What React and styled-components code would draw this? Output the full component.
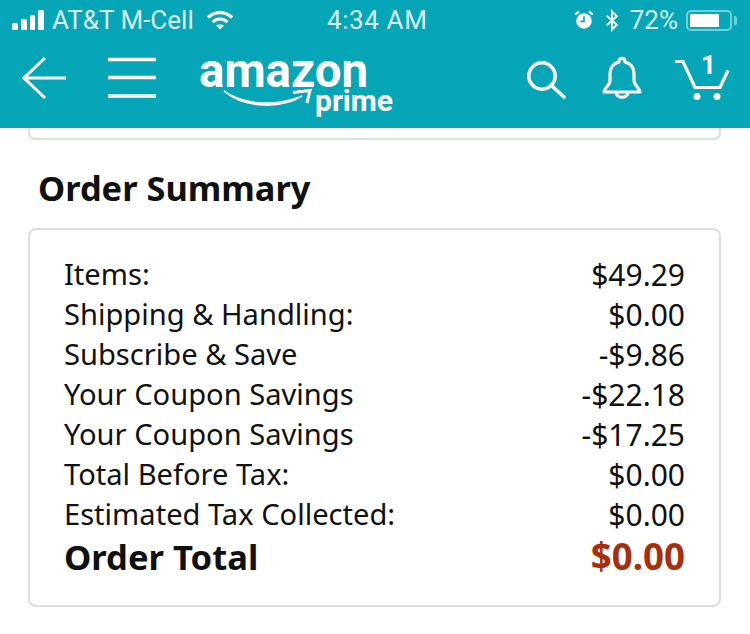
import React from 'react';
import styled, { createGlobalStyle } from 'styled-components';

const GlobalStyle = createGlobalStyle`
  html, body {
    margin: 0;
    padding: 0;
    background: #fff;
    font-family: "Noto Sans", "Open Sans", sans-serif;
  }
`;

const Page = styled.div`
  width: 750px;
  height: 634px;
  overflow: hidden;
  background: #fff;
  color: #111;
`;

const Header = styled.header`
  height: 128px;
  background: #06a5b8;
  color: #fff;
  display: flex;
  flex-direction: column;
`;

const StatusBar = styled.div`
  height: 40px;
  padding: 0 11px 0 12px;
  display: flex;
  align-items: center;
  justify-content: space-between;
  font-family: "Roboto", sans-serif;
  font-size: 26px;
  color: #d8f1f4;
`;

const StatusGroup = styled.div`
  flex: 1;
  display: flex;
  align-items: center;
  justify-content: ${(p) => p.$justify || 'flex-start'};
  gap: ${(p) => p.$gap || 8}px;
  white-space: nowrap;
`;

const Clock = styled.div`
  width: 100px;
  margin: 0 -3px 0 0;
  text-align: center;
  letter-spacing: 0.6px;
  white-space: nowrap;
`;

const Signal = styled.div`
  display: flex;
  align-items: flex-end;
  gap: 3px;
  height: 20px;
`;

const SignalBar = styled.span`
  width: 5.75px;
  height: ${(p) => p.$h}px;
  background: #fff;
  border-radius: 1.5px;
`;

const WifiIcon = styled.svg`
  margin-left: 4px;
`;

const BluetoothIcon = styled.svg`
  margin-left: 3px;
`;

const BatteryText = styled.span`
  margin-left: 3px;
`;

const Battery = styled.div`
  width: 46px;
  height: 21px;
  margin-right: 7px;
  box-sizing: border-box;
  border: 2px solid #6fd0dc;
  border-radius: 5px;
  padding: 2px;
  position: relative;
  &::after {
    content: '';
    position: absolute;
    right: -7px;
    top: 4px;
    width: 3px;
    height: 9px;
    border-radius: 0 2px 2px 0;
    background: #6fd0dc;
  }
`;

const BatteryFill = styled.div`
  width: 75%;
  height: 100%;
  background: #fff;
`;

const NavBar = styled.nav`
  flex: 1;
  display: flex;
  align-items: flex-start;
  padding: 15px 20px 0 22px;
`;

const NavIcon = styled.svg`
  display: block;
  flex: none;
  margin: ${(p) => p.$margin || 0};
`;

const Logo = styled.div`
  position: relative;
  width: 200px;
  height: 70px;
  margin-left: 44px;
`;

const LogoWord = styled.span`
  position: absolute;
  left: -1px;
  top: 0;
  font-family: "Roboto", sans-serif;
  font-weight: 700;
  font-size: 47.5px;
  line-height: 32px;
`;

const LogoPrime = styled.span`
  position: absolute;
  left: 115px;
  top: 34px;
  font-family: "Roboto", sans-serif;
  font-weight: 700;
  font-size: 30px;
  line-height: 24px;
`;

const LogoSmile = styled.svg`
  position: absolute;
  left: 22px;
  top: 33px;
`;

const NavRight = styled.div`
  margin-left: auto;
  display: flex;
  align-items: flex-start;
`;

const CartWrap = styled.div`
  position: relative;
  width: 55px;
  height: 50px;
  margin-left: 33px;
`;

const CartCount = styled.span`
  position: absolute;
  left: 26px;
  top: 0;
  font-family: "Roboto", sans-serif;
  font-size: 26px;
  font-weight: 700;
  line-height: 20px;
`;

const Content = styled.main`
  padding: 0 29px 0 28px;
`;

const PrevCard = styled.div`
  height: 10px;
  border: 2px solid #ddd;
  border-top: 0;
  border-radius: 0 0 7px 7px;
`;

const Title = styled.h2`
  margin: 28px 0 0 10px;
  font-size: 34.4px;
  font-weight: 700;
  line-height: 40px;
  color: #111;
`;

const Card = styled.section`
  margin-top: 20px;
  height: 379px;
  box-sizing: border-box;
  border: 2px solid #ddd;
  border-radius: 8px;
  padding: 24px 34px 0 34px;
`;

const Row = styled.div`
  height: ${(p) => (p.$total ? 44 : 40)}px;
  display: flex;
  align-items: center;
  justify-content: space-between;
  font-size: ${(p) => (p.$total ? 34.6 : 29.1)}px;
  font-weight: ${(p) => (p.$total ? 700 : 400)};
  white-space: nowrap;
`;

const Amount = styled.span`
  color: ${(p) => (p.$total ? '#a82e0c' : '#111')};
  font-size: ${(p) => (p.$total ? 36.7 : 30)}px;
`;

const rows = [
  ['Items:', '$49.29'],
  ['Shipping & Handling:', '$0.00'],
  ['Subscribe & Save', '-$9.86'],
  ['Your Coupon Savings', '-$22.18'],
  ['Your Coupon Savings', '-$17.25'],
  ['Total Before Tax:', '$0.00'],
  ['Estimated Tax Collected:', '$0.00'],
];

const App = () => (
  <Page>
    <GlobalStyle />
    <Header>
      <StatusBar>
        <StatusGroup $gap={8}>
          <Signal>
            <SignalBar $h={7} />
            <SignalBar $h={11} />
            <SignalBar $h={15} />
            <SignalBar $h={20} />
          </Signal>
          <span>AT&amp;T M-Cell</span>
          <WifiIcon width="28" height="20" viewBox="0 0 28 20" fill="none" stroke="#fff" strokeWidth="3.2">
            <path d="M2 7.5C9 1 19 1 26 7.5" />
            <path d="M6.5 12C11 8 17 8 21.5 12" />
            <path d="M14 19.5L10 15.5C12 14 16 14 18 15.5Z" fill="#fff" stroke="none" />
          </WifiIcon>
        </StatusGroup>
        <Clock>4:34 AM</Clock>
        <StatusGroup $justify="flex-end" $gap={8}>
          <svg width="20" height="20" viewBox="0 0 22 22">
            <circle cx="11" cy="12" r="8.5" fill="#fff" />
            <path d="M11 7v5.5H7" fill="none" stroke="#06a5b8" strokeWidth="1.8" />
            <path d="M1.5 5L5.5 1.5M20.5 5L16.5 1.5" stroke="#fff" strokeWidth="2.4" />
          </svg>
          <BluetoothIcon width="14" height="23" viewBox="0 0 16 24" fill="none" stroke="#fff" strokeWidth="2.2">
            <path d="M2 6.5L13.5 17L8 22.5V1.5L13.5 7L2 17.5" />
          </BluetoothIcon>
          <BatteryText>72%</BatteryText>
          <Battery>
            <BatteryFill />
          </Battery>
        </StatusGroup>
      </StatusBar>
      <NavBar>
        <NavIcon width="44" height="44" viewBox="0 0 44 44" fill="none" stroke="#fff" strokeWidth="3" $margin="1px 0 0 0">
          <path d="M44 22H2M23 2L2 22L23 42" />
        </NavIcon>
        <NavIcon width="48" height="44" viewBox="0 0 48 44" fill="none" stroke="#fff" strokeWidth="3.4" $margin="1px 0 0 42px">
          <path d="M0 3.5H48M0 21.5H48M0 40H48" />
        </NavIcon>
        <Logo>
          <LogoWord>amazon</LogoWord>
          <LogoSmile width="96" height="30" viewBox="0 0 96 30" fill="none" stroke="#fff">
            <path d="M2 3C20 15 48 20 78 9L80 8C62 20 24 22 2 3Z" fill="#fff" strokeWidth="1.5" />
            <path d="M71 4.5L88 2.5L85 15" strokeWidth="3" />
          </LogoSmile>
          <LogoPrime>prime</LogoPrime>
        </Logo>
        <NavRight>
          <NavIcon width="40" height="44" viewBox="0 0 40 44" fill="none" stroke="#fff" strokeWidth="3.5">
            <circle cx="15" cy="21" r="13.2" />
            <path d="M25 31L37 42" strokeLinecap="round" />
          </NavIcon>
          <NavIcon width="40" height="46" viewBox="0 0 40 46" fill="none" stroke="#fff" strokeWidth="3.2" strokeLinejoin="round" $margin="0 0 0 35px">
            <path d="M2 37C2 33 8 31 8 25V19C8 11 13 8 17 7C17 2 23 2 23 7C27 8 32 11 32 19V25C32 31 38 33 38 37Z" />
            <path d="M14 37C14 44 26 44 26 37" />
          </NavIcon>
          <CartWrap>
            <svg width="55" height="50" viewBox="0 0 55 50" fill="none" stroke="#fff" strokeWidth="3.2">
              <path d="M0 6.5H8L20 32.5H45L53 15.5" />
              <circle cx="22" cy="41.5" r="3.5" fill="#fff" stroke="none" />
              <circle cx="42" cy="41.5" r="3.5" fill="#fff" stroke="none" />
            </svg>
            <CartCount>1</CartCount>
          </CartWrap>
        </NavRight>
      </NavBar>
    </Header>
    <Content>
      <PrevCard />
      <Title>Order Summary</Title>
      <Card>
        {rows.map(([label, amount], i) => (
          <Row key={i}>
            <span>{label}</span>
            <Amount>{amount}</Amount>
          </Row>
        ))}
        <Row $total>
          <span>Order Total</span>
          <Amount $total>$0.00</Amount>
        </Row>
      </Card>
    </Content>
  </Page>
);

export default App;
